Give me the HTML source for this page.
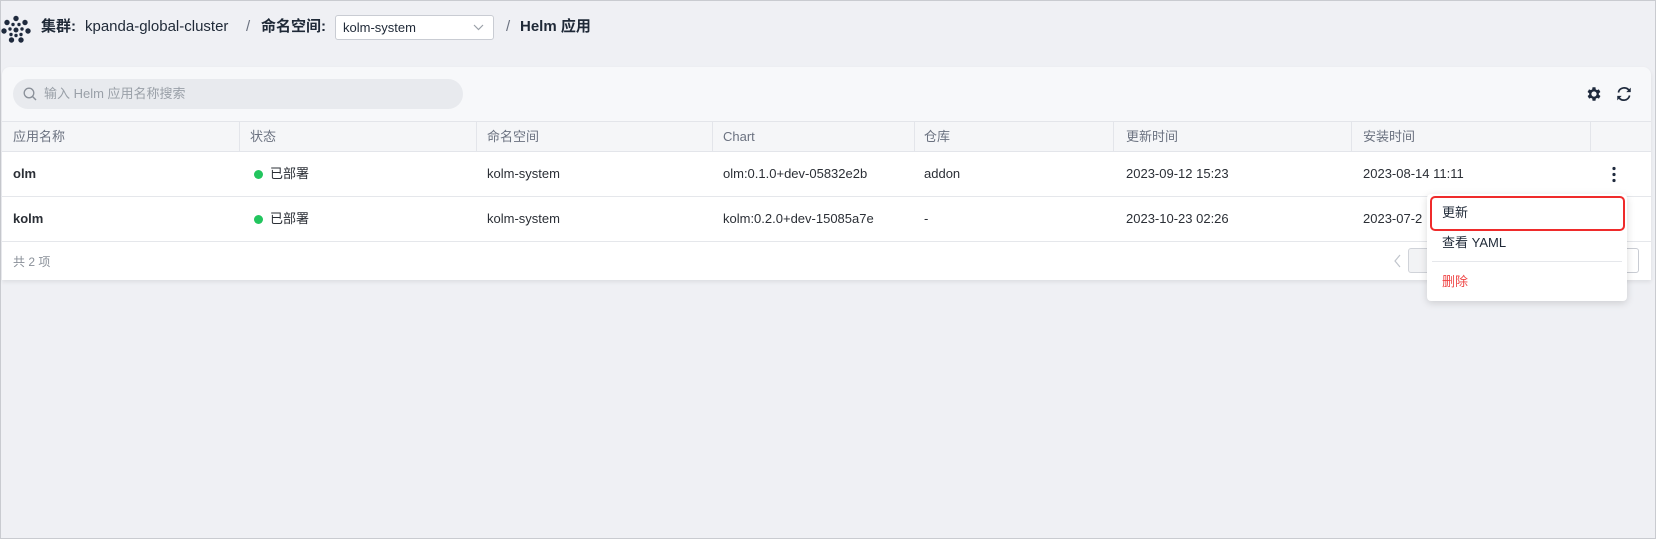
<!DOCTYPE html>
<html><head><meta charset="utf-8"><style>
*{box-sizing:border-box;margin:0;padding:0}
body{width:1656px;height:539px;background:#eff0f4;font-family:"Liberation Sans","Noto Sans CJK SC",sans-serif;color:#1f2937;position:relative;overflow:hidden;border:1px solid #c9cbd0}
.a{position:absolute;white-space:nowrap;line-height:16px}
.bc{font-size:15px;top:17px;line-height:18px}
.b{font-weight:bold}
.card{position:absolute;left:1px;top:66px;width:1649px;height:213px;background:#f7f8fa;border-radius:8px 8px 0 0;box-shadow:0 2px 4px rgba(0,0,0,.08);overflow:hidden}
.hd{position:absolute;left:0;top:54px;width:100%;height:31px;border-top:1px solid #e3e5ea;border-bottom:1px solid #e3e5ea;background:#f5f6f8}
.row{position:absolute;left:0;width:100%;height:45px;background:#fff;border-bottom:1px solid #e5e7eb}
.vl{position:absolute;top:0;width:1px;height:30px;background:#e3e5ea}
.ht{position:absolute;top:7px;font-size:13px;line-height:16px;color:#6b7280;white-space:nowrap}
.ct{position:absolute;top:14px;font-size:13px;line-height:16px;color:#2b2f36;white-space:nowrap}
.dot{position:absolute;left:252px;top:18px;width:9px;height:9px;border-radius:50%;background:#22c55e}
</style></head><body>
<svg class="a" style="left:0;top:8px" width="30" height="34" viewBox="0 5 30 34">
<g fill="#1f2a3d">
<circle cx="15" cy="14.5" r="2.7"/><circle cx="6" cy="18.5" r="2.7"/><circle cx="24" cy="18.5" r="2.7"/>
<circle cx="3" cy="27" r="2.7"/><circle cx="27" cy="27" r="2.7"/><circle cx="10.5" cy="36" r="2.7"/><circle cx="20" cy="36" r="2.7"/>
<circle cx="12" cy="20.5" r="1.7"/><circle cx="18" cy="20.5" r="1.7"/><circle cx="9" cy="25" r="1.7"/><circle cx="21" cy="25" r="1.7"/>
<circle cx="10" cy="30.5" r="1.7"/><circle cx="20" cy="30.5" r="1.7"/><circle cx="15" cy="26" r="2.5"/><circle cx="15" cy="31.5" r="1.7"/>
</g></svg>
<div class="a bc b" style="left:40px">集群:</div>
<div class="a bc" style="left:84px">kpanda-global-cluster</div>
<div class="a bc" style="left:245px;color:#6b7280">/</div>
<div class="a bc b" style="left:260px">命名空间:</div>
<div class="a" style="left:334px;top:14px;width:159px;height:25px;background:#fff;border:1px solid #c9ccd3;border-radius:3px;font-size:13px;line-height:23px;padding-left:7px">kolm-system
<svg style="position:absolute;right:9px;top:8px" width="11" height="7" viewBox="0 0 11 7"><path d="M1 1l4.5 4.5L10 1" fill="none" stroke="#9aa0a8" stroke-width="1.2"/></svg></div>
<div class="a bc" style="left:505px;color:#6b7280">/</div>
<div class="a bc b" style="left:519px">Helm 应用</div>

<div class="card">
<div class="a" style="left:11px;top:12px;width:450px;height:30px;border-radius:15px;background:#e8eaee"></div>
<svg class="a" style="left:21px;top:20px" width="14" height="14" viewBox="0 0 14 14"><circle cx="6" cy="6" r="4.8" fill="none" stroke="#8a9099" stroke-width="1.3"/><path d="M9.5 9.5L13 13" stroke="#8a9099" stroke-width="1.4"/></svg>
<div class="a" style="left:42px;top:19px;font-size:13px;color:#9aa0a8">输入 Helm 应用名称搜索</div>
<svg class="a" style="left:1583px;top:18px" width="18" height="18" viewBox="0 0 24 24"><path fill="#1f2a3d" d="M19.4 13a7.5 7.5 0 000-2l2.1-1.6-2-3.5-2.5 1a7.6 7.6 0 00-1.7-1L15 3h-4l-.4 2.9a7.6 7.6 0 00-1.7 1l-2.5-1-2 3.5L6.6 11a7.5 7.5 0 000 2l-2.1 1.6 2 3.5 2.5-1a7.6 7.6 0 001.7 1L11 21h4l.4-2.9a7.6 7.6 0 001.7-1l2.5 1 2-3.5zM13 15.5a3.5 3.5 0 110-7 3.5 3.5 0 010 7z" transform="translate(-1 0)"/></svg>
<svg class="a" style="left:1613px;top:18px" width="18" height="18" viewBox="0 0 24 24"><g fill="none" stroke="#1f2a3d" stroke-width="2.2"><path d="M4.5 10a8 8 0 0114.5-2.5"/><path d="M19.5 14a8 8 0 01-14.5 2.5"/></g><path fill="#1f2a3d" d="M21 3.5v6h-6zM3 20.5v-6h6z"/></svg>
<div class="hd">
<div class="ht" style="left:11px">应用名称</div><div class="ht" style="left:248px">状态</div><div class="ht" style="left:485px">命名空间</div><div class="ht" style="left:721px">Chart</div><div class="ht" style="left:922px">仓库</div><div class="ht" style="left:1124px">更新时间</div><div class="ht" style="left:1361px">安装时间</div>
<div class="vl" style="left:237px"></div><div class="vl" style="left:474px"></div><div class="vl" style="left:710px"></div><div class="vl" style="left:912px"></div><div class="vl" style="left:1111px"></div><div class="vl" style="left:1349px"></div><div class="vl" style="left:1588px"></div>
</div>
<div class="row" style="top:85px">
<div class="ct b" style="left:11px">olm</div><div class="dot"></div><div class="ct" style="left:268px">已部署</div><div class="ct" style="left:485px">kolm-system</div><div class="ct" style="left:721px">olm:0.1.0+dev-05832e2b</div><div class="ct" style="left:922px">addon</div><div class="ct" style="left:1124px">2023-09-12 15:23</div><div class="ct" style="left:1361px">2023-08-14 11:11</div>
<svg class="a" style="left:1609px;top:14px" width="6" height="17"><circle cx="3" cy="2.5" r="1.6" fill="#1f2a3d"/><circle cx="3" cy="8.5" r="1.6" fill="#1f2a3d"/><circle cx="3" cy="14.5" r="1.6" fill="#1f2a3d"/></svg>
</div>
<div class="row" style="top:130px">
<div class="ct b" style="left:11px">kolm</div><div class="dot"></div><div class="ct" style="left:268px">已部署</div><div class="ct" style="left:485px">kolm-system</div><div class="ct" style="left:721px">kolm:0.2.0+dev-15085a7e</div><div class="ct" style="left:922px">-</div><div class="ct" style="left:1124px">2023-10-23 02:26</div><div class="ct" style="left:1361px">2023-07-2</div>
</div>
<div class="row" style="top:175px;height:38px;border:none">
<div class="ct" style="left:11px;top:12px;font-size:12px;color:#8a9099">共 2 项</div>
<svg class="a" style="left:1392px;top:12px" width="8" height="14"><path d="M6 1L1 7l5 6" fill="none" stroke="#c0c4cc" stroke-width="1.2"/></svg>
<div class="a" style="left:1406px;top:6px;width:30px;height:25px;border:1px solid #d0d3d9;border-radius:3px;background:#f2f3f5"></div>
<div class="a" style="left:1610px;top:6px;width:27px;height:25px;border:1px solid #c9ccd3;border-radius:3px;background:#fff"></div>
</div>
</div>

<div class="a" style="left:1426px;top:193px;width:200px;height:107px;background:#fff;border-radius:4px;box-shadow:0 2px 8px rgba(0,0,0,.15)">
<div class="a" style="left:3px;top:2px;width:195px;height:35px;border:2px solid #ef2b2b;border-radius:5px"></div>
<div class="a" style="left:15px;top:11px;font-size:13px">更新</div>
<div class="a" style="left:15px;top:41px;font-size:13px">查看 YAML</div>
<div class="a" style="left:5px;top:67px;width:190px;height:1px;background:#e5e7eb"></div>
<div class="a" style="left:15px;top:80px;font-size:13px;color:#ef4444">删除</div>
</div>
</body></html>
